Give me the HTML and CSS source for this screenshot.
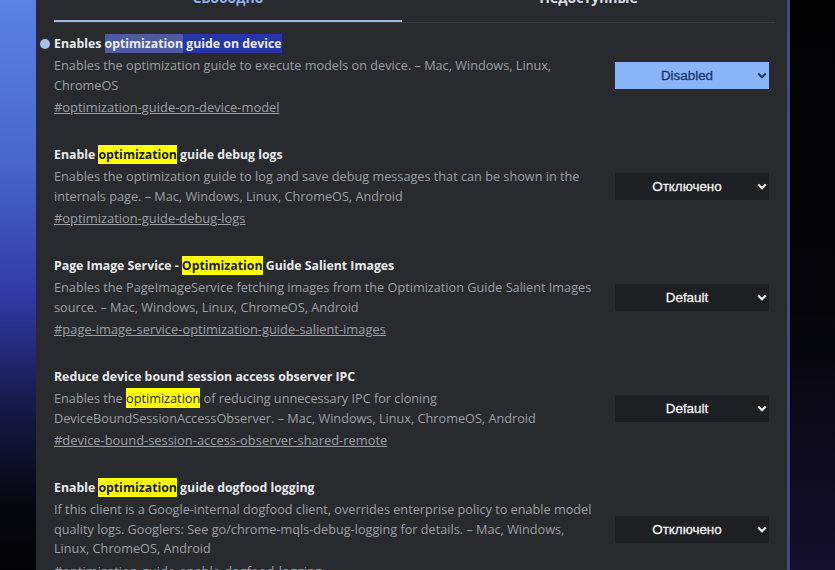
FILE: index.html
```html
<!DOCTYPE html>
<html lang="ru">
<head>
<meta charset="utf-8">
<title>Experiments</title>
<link rel="stylesheet" href="styles.css">
</head>
<body>
<div class="page">
  <div class="side-left"></div>
  <main class="panel">
    <div class="tabs">
      <div class="tab tab-active">Свободно</div>
      <div class="tab tab-other">Недоступные</div>
    </div>
    <div class="list">
      <section class="exp">
        <h3 class="exp-title exp-title-dot">Enables <span class="sel-a">optimization</span><span class="sel-b"> guide on device</span></h3>
        <div class="exp-row">
          <p class="exp-desc">Enables the optimization guide to execute models on device. – Mac, Windows, Linux,<br>ChromeOS</p>
          <div class="dd dd-on"><span class="dd-text">Disabled</span><svg class="dd-chev" width="10" height="7" viewBox="0 0 10 7"><path d="M1.3 1.5 L5 5.2 L8.7 1.5" fill="none" stroke="currentColor" stroke-width="2.2"/></svg></div>
        </div>
        <a class="exp-link" href="#optimization-guide-on-device-model">#optimization-guide-on-device-model</a>
      </section>
      <section class="exp">
        <h3 class="exp-title">Enable <mark class="hit">optimization</mark> guide debug logs</h3>
        <div class="exp-row">
          <p class="exp-desc">Enables the optimization guide to log and save debug messages that can be shown in the<br>internals page. – Mac, Windows, Linux, ChromeOS, Android</p>
          <div class="dd"><span class="dd-text">Отключено</span><svg class="dd-chev" width="10" height="7" viewBox="0 0 10 7"><path d="M1.3 1.5 L5 5.2 L8.7 1.5" fill="none" stroke="currentColor" stroke-width="2.2"/></svg></div>
        </div>
        <a class="exp-link" href="#optimization-guide-debug-logs">#optimization-guide-debug-logs</a>
      </section>
      <section class="exp">
        <h3 class="exp-title">Page Image Service - <mark class="hit">Optimization</mark> Guide Salient Images</h3>
        <div class="exp-row">
          <p class="exp-desc">Enables the PageImageService fetching images from the Optimization Guide Salient Images<br>source. – Mac, Windows, Linux, ChromeOS, Android</p>
          <div class="dd"><span class="dd-text">Default</span><svg class="dd-chev" width="10" height="7" viewBox="0 0 10 7"><path d="M1.3 1.5 L5 5.2 L8.7 1.5" fill="none" stroke="currentColor" stroke-width="2.2"/></svg></div>
        </div>
        <a class="exp-link" href="#page-image-service-optimization-guide-salient-images">#page-image-service-optimization-guide-salient-images</a>
      </section>
      <section class="exp">
        <h3 class="exp-title">Reduce device bound session access observer IPC</h3>
        <div class="exp-row">
          <p class="exp-desc">Enables the <mark class="hit">optimization</mark> of reducing unnecessary IPC for cloning<br>DeviceBoundSessionAccessObserver. – Mac, Windows, Linux, ChromeOS, Android</p>
          <div class="dd"><span class="dd-text">Default</span><svg class="dd-chev" width="10" height="7" viewBox="0 0 10 7"><path d="M1.3 1.5 L5 5.2 L8.7 1.5" fill="none" stroke="currentColor" stroke-width="2.2"/></svg></div>
        </div>
        <a class="exp-link" href="#device-bound-session-access-observer-shared-remote">#device-bound-session-access-observer-shared-remote</a>
      </section>
      <section class="exp">
        <h3 class="exp-title">Enable <mark class="hit">optimization</mark> guide dogfood logging</h3>
        <div class="exp-row">
          <p class="exp-desc">If this client is a Google-internal dogfood client, overrides enterprise policy to enable model<br>quality logs. Googlers: See go/chrome-mqls-debug-logging for details. – Mac, Windows,<br>Linux, ChromeOS, Android</p>
          <div class="dd"><span class="dd-text">Отключено</span><svg class="dd-chev" width="10" height="7" viewBox="0 0 10 7"><path d="M1.3 1.5 L5 5.2 L8.7 1.5" fill="none" stroke="currentColor" stroke-width="2.2"/></svg></div>
        </div>
        <a class="exp-link" href="#optimization-guide-enable-dogfood-logging">#optimization-guide-enable-dogfood-logging</a>
      </section>
    </div>
  </main>
  <div class="side-right"></div>
</div>
</body>
</html>
```
FILE: styles.css
```css
html, body {
  margin: 0;
  padding: 0;
  height: 570px;
  overflow: hidden;
  background: #040406;
}

.page {
  display: flex;
  height: 570px;
  font-family: "Open Sans", "Noto Sans", sans-serif;
}

.side-left {
  width: 36px;
  flex: none;
  background: linear-gradient(to bottom, #5b82e4 0%, #4a66cf 28%, #3139a4 52%, #181a4c 70%, #07070f 88%, #030305 100%);
}

.panel {
  width: 733px;
  flex: none;
  padding-left: 18px;
  background: #292a2d;
  border-right: 3px solid #4a4680;
  overflow: hidden;
}

.side-right {
  flex: 1;
  background: linear-gradient(to bottom, #030304 0%, #050509 55%, #140f2d 100%);
}

.tabs {
  display: flex;
  width: 721px;
  height: 34px;
  margin-top: -12px;
  border-bottom: 1px solid #3c3d41;
}

.tab {
  box-sizing: border-box;
  height: 34px;
  font-size: 14px;
  font-weight: 700;
  line-height: 20px;
  text-align: center;
}

.tab-active {
  width: 348px;
  color: #8fb1f0;
  border-bottom: 2px solid #a4b6de;
}

.tab-other {
  width: 373px;
  color: #dadce0;
}

.list {
  margin-top: 11px;
}

.exp {
  width: 715px;
  margin-bottom: 28px;
}

.exp-title {
  position: relative;
  margin: 0;
  font-size: 12.3px;
  font-weight: 700;
  line-height: 20px;
  color: #e8eaed;
}

.exp-title-dot::before {
  content: "";
  position: absolute;
  left: -14px;
  top: 5px;
  width: 10px;
  height: 10px;
  border-radius: 50%;
  background: #a6bff2;
}

.sel-a {
  background: #4e5b9e;
  padding: 1px 0;
}

.sel-b {
  background: #2536a9;
  padding: 1px 0;
}

.hit {
  background: #ffff00;
  color: #1b1b1b;
  padding: 1px 0;
}

.exp-row {
  display: flex;
  align-items: center;
  justify-content: space-between;
  margin-top: 2px;
}

.exp-desc {
  margin: 0;
  font-size: 12.7px;
  line-height: 19.5px;
  color: #9aa0a6;
  white-space: nowrap;
}

.exp-link {
  display: block;
  margin-top: 2px;
  font-size: 12.9px;
  line-height: 20px;
  color: #9aa0a6;
  text-decoration: underline;
  white-space: nowrap;
}

.dd {
  box-sizing: border-box;
  width: 154px;
  height: 27px;
  flex: none;
  display: flex;
  align-items: center;
  padding: 0 2px 0 6px;
  background: #1e1f22;
  color: #f1f1f1;
  font-family: "Liberation Sans", Arial, sans-serif;
  font-size: 13.4px;
  -webkit-text-stroke: 0.3px currentColor;
}

.dd-on {
  background: #8ab4f8;
  color: #1c3468;
}

.dd-text {
  flex: 1;
  text-align: center;
}

.dd-chev {
  flex: none;
  margin-left: 4px;
}
```
